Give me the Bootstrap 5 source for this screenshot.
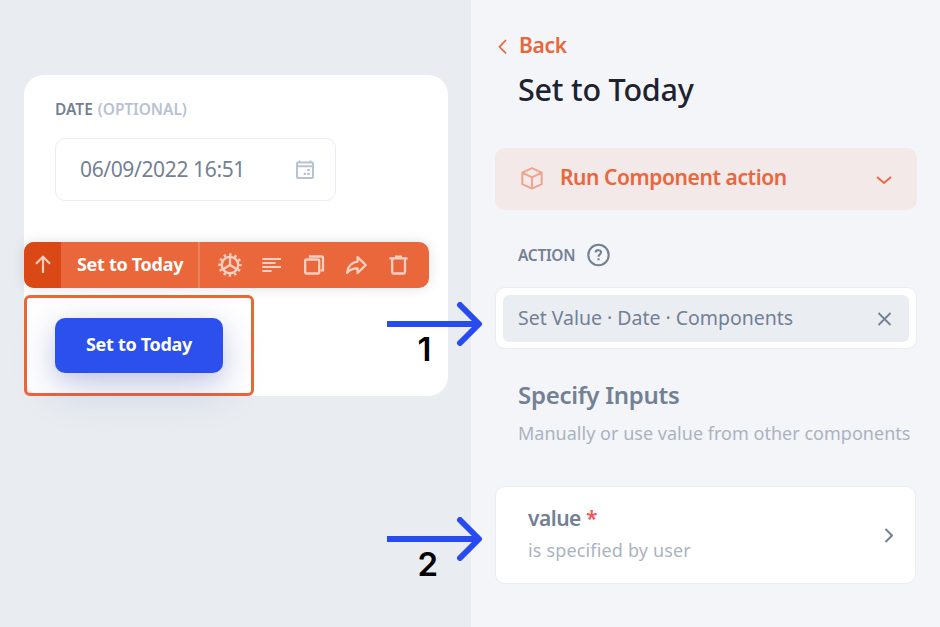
<!DOCTYPE html>
<html lang="en">
<head>
<meta charset="utf-8">
<meta name="viewport" content="width=device-width, initial-scale=1">
<title>Set to Today</title>
<link href="https://cdn.jsdelivr.net/npm/bootstrap@5.3.0/dist/css/bootstrap.min.css" rel="stylesheet">
<style>
body{font-family:"Noto Sans","Open Sans",sans-serif;background:#f3f5f9;color:#748094;width:940px;height:627px;overflow:hidden;line-height:1}
svg{display:block;fill:none;flex:none}
.t{white-space:nowrap;display:block}
.canvas-pane{width:471px;height:627px;background:#e9edf1;padding:75px 0 0 24px}
.form-card{width:424px;height:321px;border-radius:20px;background:#fff}
.field-label{height:63px;padding:6px 0 0 31px;font-size:15.5px;font-weight:600;gap:5px}
.muted-label{color:#b8c2d2;letter-spacing:-.08px}
.date-field{width:281px;height:63px;margin-left:31px;border:1px solid #ebecf5;border-radius:10px;padding:0 20px 0 24px;font-size:21px;letter-spacing:-.37px}
.toolbar-strip{width:405px;height:46px;margin-top:41px;border-radius:10px;background:#ea663b;color:#fff;box-shadow:0 0 14px rgba(0,0,0,.12);overflow:hidden}
.up-cell{width:37px;background:#d94815}
.strong-label{font-size:18px;font-weight:700;letter-spacing:-.3px}
.title-cell{width:139px;border-right:2px solid #ed8159;padding:0 0 2px 16px}
.tool-icons{padding-left:18px;gap:18px}
.tool-icons svg{stroke:#f9d0c2;stroke-width:2.3}
.selected-box{width:230px;height:101px;margin-top:7px;border:3px solid #ea663b;border-radius:6px;padding:20px 0 0 28px}
.primary-btn{width:168px;height:55px;border-radius:10px;background:#2c50ed;color:#fff;border:0;padding:0 0 3px;box-shadow:0 14px 44px rgba(44,60,160,.22),0 6px 18px rgba(44,60,160,.12)}
.side-pane{width:469px;height:627px;padding:0 24px}
.accent{color:#ea663b}
.back-row{margin-top:30px;height:31px;font-size:21px;font-weight:600;gap:12px;padding-left:3px}
.back-row .t{letter-spacing:-.3px}
.page-title{margin:6px 0 0 23px;height:44px;font-size:30.5px;font-weight:500;color:#1d232e;line-height:44px;letter-spacing:-.22px}
.action-select{margin-top:37px;width:422px;height:62px;border-radius:10px;background:#f2e9e8;padding:0 25px 0 26px;font-size:21px;font-weight:600;letter-spacing:-.42px}
.action-select .t{padding:0 0 4px 17px}
.action-label{margin:30px 0 0 23px;height:30px;font-size:15.5px;font-weight:600;gap:12px;letter-spacing:-.3px}
.action-label .t{padding-top:2px}
.chip-box{margin-top:17px;width:422px;height:62px;border-radius:10px;background:#fff;border:1px solid #ebecf5;padding:7px}
.chip{width:406px;height:47px;border-radius:6px;background:#eaeef3;padding:0 17px 0 15px;font-size:19.5px;letter-spacing:-.02px}
.chip .t{padding-bottom:2px}
.section-title{margin:30px 0 0 23px;height:32px;line-height:32px;font-size:24px;font-weight:600;letter-spacing:-.28px}
.section-note{margin:8px 0 0 23px;height:28px;line-height:28px;font-size:18px;color:#abb3c0;letter-spacing:.02px}
.value-card{margin-top:39px;width:421px;height:98px;border-radius:10px;background:#fff;border:1px solid #ebecf5;padding:0 22px 0 32px}
.value-text{padding-bottom:2px}
.value-name{font-size:21px;line-height:32px;font-weight:600;gap:5px}
.value-name .t{letter-spacing:-.5px}
.required-mark{color:#f0565c}
.value-note{font-size:18px;line-height:32px;color:#abb3c0;letter-spacing:.16px}
.pointer{left:380px;width:110px}
.pointer-one{top:302px}
.pointer-two{top:517px}
.pointer span{font:600 33px/34px Inter,sans-serif;color:#000;display:block;margin:-14px 0 0 37.500px}
</style>
<script src="https://cdn.jsdelivr.net/npm/bootstrap@5.3.0/dist/js/bootstrap.bundle.min.js"></script>
</head>
<body class="position-relative">
<main class="d-flex">
<section class="canvas-pane">
 <div class="form-card">
  <div class="field-label d-flex align-items-center"><span class="t">DATE</span><span class="t muted-label">(OPTIONAL)</span></div>
  <div class="date-field d-flex align-items-center justify-content-between"><span class="t">06/09/2022 16:51</span>
   <svg width="20" height="20" stroke="#b8c2d2" stroke-width="2"><rect x="2" y="2.500" width="16" height="15.500" rx="1"/><path d="M2 6.300h16M4.500 .5v2M15.500 .5v2"/><path stroke="none" fill="#b8c2d2" d="M12.300 9h2.400v2.300h-2.400zM12.300 12.800h2.400v2.300h-2.400zM8.700 12.800h2.400v2.300h-2.400z"/></svg></div>
  <div class="toolbar-strip d-flex">
   <div class="up-cell d-flex align-items-center justify-content-center"><svg width="18" height="20" stroke="#f8cdbd" stroke-width="2.200"><path d="M9 18V2M2 8.800L9 1.800L16 8.800"/></svg></div>
   <div class="title-cell d-flex align-items-center"><span class="t strong-label">Set to Today</span></div>
   <div class="tool-icons d-flex align-items-center">
    <svg width="24" height="24"><circle cx="12" cy="12" r="8.200"/><circle cx="12" cy="12" r="10.300" stroke-width="2.800" stroke-dasharray="2.500 2.893" stroke-dashoffset="1.250"/><path d="M12 3.500V12L4.800 16.500M12 12l7.200 4.500"/></svg>
    <svg width="24" height="24" stroke-linecap="butt"><path stroke-width="2" d="M2.300 6H21M2.300 10H15.600M2.300 14H21M2.300 18H11.500"/></svg>
    <svg width="24" height="24"><rect x="3.200" y="6.500" width="14" height="14" rx="1.500"/><path d="M6.800 3.500H19.700Q21 3.500 21 4.800V17.300H18.500"/></svg>
    <svg width="24" height="24" stroke-linejoin="round"><path d="M3 20C4 13 7.500 9.300 13.600 8.600V4.200L21.800 12L13.600 20V15.400C9 15.200 6 16.500 3 20Z"/></svg>
    <svg width="24" height="24"><path d="M3.300 5.400H21.700M9 3.600H16M6.200 6V19Q6.200 20.500 7.900 20.500H17.300Q19 20.500 19 19V6"/></svg>
   </div>
  </div>
  <div class="selected-box"><button class="primary-btn d-flex align-items-center justify-content-center"><span class="t strong-label">Set to Today</span></button></div>
 </div>
</section>
<section class="side-pane">
 <div class="back-row d-flex align-items-center accent"><svg width="9" height="16" stroke="currentColor" stroke-width="1.700"><path d="M8 2L1.500 8.800L8 15.300"/></svg><span class="t">Back</span></div>
 <h1 class="page-title">Set to Today</h1>
 <div class="action-select d-flex align-items-center accent">
  <svg width="22" height="24" stroke="#f1a48d" stroke-width="2" stroke-linejoin="round"><path d="M11 1.200L20.700 5.600V17.200L11 21.600L1.300 17.200V5.600ZM1.300 5.600L11 10.400L20.700 5.600M11 10.400V21.600"/></svg>
  <span class="t">Run Component action</span>
  <svg class="ms-auto" width="16" height="10" stroke="currentColor" stroke-width="1.800"><path d="M1 3L8 9L15 3"/></svg>
 </div>
 <div class="action-label d-flex align-items-center"><span class="t">ACTION</span>
  <svg width="23" height="24" stroke="#748094" stroke-width="2.100"><circle cx="11.500" cy="12" r="10.200"/><path d="M8.600 9.500C8.900 6.300 14.300 6.500 14 9.500C13.800 11.500 11.500 11.300 11.500 13.800M11.500 15.300V17.300"/></svg></div>
 <div class="chip-box"><div class="chip d-flex align-items-center justify-content-between"><span class="t">Set Value · Date · Components</span>
  <svg width="15" height="15" stroke="#748094" stroke-width="1.900"><path d="M1.500 2L13.500 14M13.500 2L1.500 14"/></svg></div></div>
 <div class="section-title">Specify Inputs</div>
 <div class="section-note text-nowrap">Manually or use value from other components</div>
 <div class="value-card d-flex align-items-center justify-content-between">
  <div class="value-text"><div class="value-name d-flex"><span class="t">value</span><span class="t required-mark">*</span></div><span class="t value-note">is specified by user</span></div>
  <svg width="9" height="16" stroke="#748094" stroke-width="2"><path d="M1.500 2L8 8.500L1.500 15"/></svg>
 </div>
</section>
</main>
<div class="pointer pointer-one position-absolute"><svg width="110" height="44" stroke="#284bf0" stroke-width="6" stroke-linejoin="round"><path d="M7 22H98"/><path stroke-linecap="round" d="M80 3L99 22L80 41"/></svg><span>1</span></div>
<div class="pointer pointer-two position-absolute"><svg width="110" height="44" stroke="#284bf0" stroke-width="6" stroke-linejoin="round"><path d="M7 22H98"/><path stroke-linecap="round" d="M80 3L99 22L80 41"/></svg><span>2</span></div>
</body>
</html>
